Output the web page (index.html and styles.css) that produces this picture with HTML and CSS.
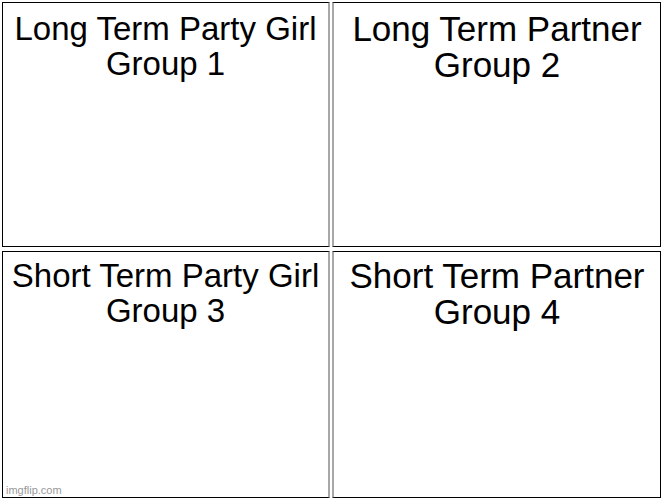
FILE: index.html
```html
<!DOCTYPE html>
<html>
<head>
<meta charset="utf-8">
<link rel="stylesheet" href="styles.css">
</head>
<body>
<div class="meme">
  <div class="panel left">
    <div class="caption small">Long Term Party Girl<br>Group 1</div>
  </div>
  <div class="panel right">
    <div class="caption big">Long Term Partner<br>Group 2</div>
  </div>
  <div class="panel left bottom">
    <div class="caption small">Short Term Party Girl<br>Group 3</div>
    <div class="watermark">imgflip.com</div>
  </div>
  <div class="panel right bottom">
    <div class="caption big">Short Term Partner<br>Group 4</div>
  </div>
</div>
</body>
</html>
```

FILE: styles.css
```css
html, body {
  margin: 0;
  padding: 0;
  background: #ffffff;
}
.meme {
  width: 663px;
  height: 500px;
  box-sizing: border-box;
  padding: 2px;
  display: grid;
  grid-template-columns: 328px 329px;
  grid-template-rows: 245px 247px;
  column-gap: 2px;
  row-gap: 4px;
  background: #ffffff;
}
.panel {
  position: relative;
  box-sizing: border-box;
  border: 1px solid #000;
  background: #fff;
  display: flex;
  flex-direction: column;
  align-items: center;
}
.panel.left {
  border-right: 2px solid #a8a8a8;
}
.panel.right {
  border-left: 2px solid #a8a8a8;
}
.caption {
  font-family: "Liberation Sans", Arial, sans-serif;
  color: #000;
  text-align: center;
  white-space: nowrap;
  padding-top: 8px;
}
.panel.bottom .caption {
  padding-top: 6px;
}
.caption.small {
  font-size: 33px;
  line-height: 35px;
}
.caption.big {
  font-size: 35px;
  line-height: 36px;
}
.watermark {
  position: absolute;
  left: 3px;
  bottom: 1px;
  font-family: "Liberation Sans", Arial, sans-serif;
  font-size: 11px;
  color: #999;
}
```
